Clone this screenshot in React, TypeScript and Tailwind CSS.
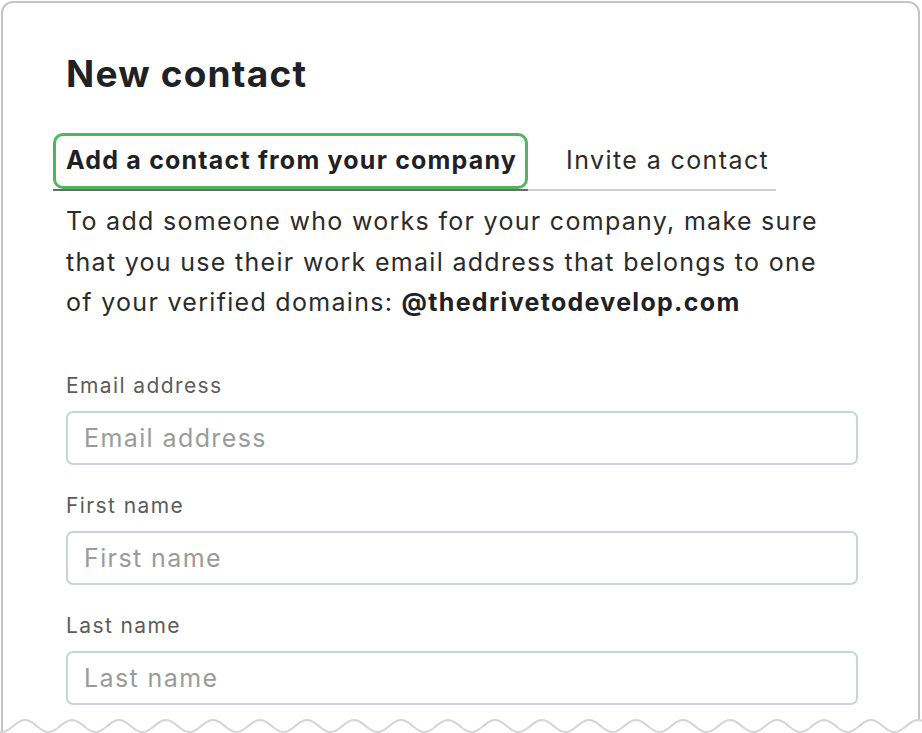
import { useMemo } from "react"

const fields = ["Email address", "First name", "Last name"]

function Wave() {
  // torn bottom edge of the card
  const line = useMemo(() => {
    const pts: string[] = []
    for (let x = 0; x <= 922; x += 2) {
      const y = 13 - 6 * Math.cos((2 * Math.PI * (x - 25)) / 47)
      pts.push(`${x},${y.toFixed(2)}`)
    }
    return pts
  }, [])

  return (
    <svg className="absolute left-0 bottom-0" width="922" height="20" viewBox="0 0 922 20">
      <path d={`M${line.join(" L")} L922,20 L0,20 Z`} fill="#ffffff" />
      <path d={`M${line.join(" L")}`} fill="none" stroke="#d4d4d4" strokeWidth="2" />
    </svg>
  )
}

function Field({ label }: { label: string }) {
  return (
    <div className="flex flex-col">
      <label className="text-[21px] leading-[30px] tracking-[1.4px] text-[#5c5c5c]">{label}</label>
      <input
        placeholder={label}
        className="mt-[10px] h-[54px] w-[792px] rounded-[7px] border-2 border-[#c9d3dd] px-[16px] text-[25px] tracking-[1.4px] text-[#2b2b2b] placeholder:text-[#9b9b9b] outline-none"
      />
    </div>
  )
}

export default function App() {
  return (
    <div className="relative w-[922px] h-[733px] overflow-hidden bg-white font-['Inter',sans-serif]">
      <div className="ml-[1px] mt-[1px] w-[919px] h-[760px] rounded-[12px] border-2 border-[#c4c4c4] pl-[63px] pt-[49px]">
        <h1 className="text-[37px] leading-[44px] font-bold text-[#1e2125] tracking-[1.2px]">New contact</h1>

        <div className="mt-[37px] ml-[-13px] flex w-[723px] border-b-2 border-[#cfcfcf]">
          <div className="-mb-[2px] border-b-2 border-[#6b6b6b]">
            <div className="flex h-[56px] items-center rounded-[10px] border-[3px] border-[#4cb85c] pl-[10px] pr-[8px] text-[25px] font-bold tracking-[1.2px] text-[#1e2125] whitespace-nowrap">
              Add a contact from your company
            </div>
          </div>
          <div className="flex h-[56px] items-center pl-[38px] text-[25px] tracking-[1.4px] text-[#2b2b2b] whitespace-nowrap">
            Invite a contact
          </div>
        </div>

        <p className="mt-[10px] text-[25px] leading-[40.5px] tracking-[1.3px] text-[#2b2b2b] whitespace-nowrap">
          To add someone who works for your company, make sure
          <br />
          that you use their work email address that belongs to one
          <br />
          of your verified domains: <span className="font-bold text-[#1e2125]">@thedrivetodevelop.com</span>
        </p>

        <div className="mt-[48px] flex flex-col gap-[26px]">
          {fields.map((f) => (
            <Field key={f} label={f} />
          ))}
        </div>
      </div>
      <Wave />
    </div>
  )
}
